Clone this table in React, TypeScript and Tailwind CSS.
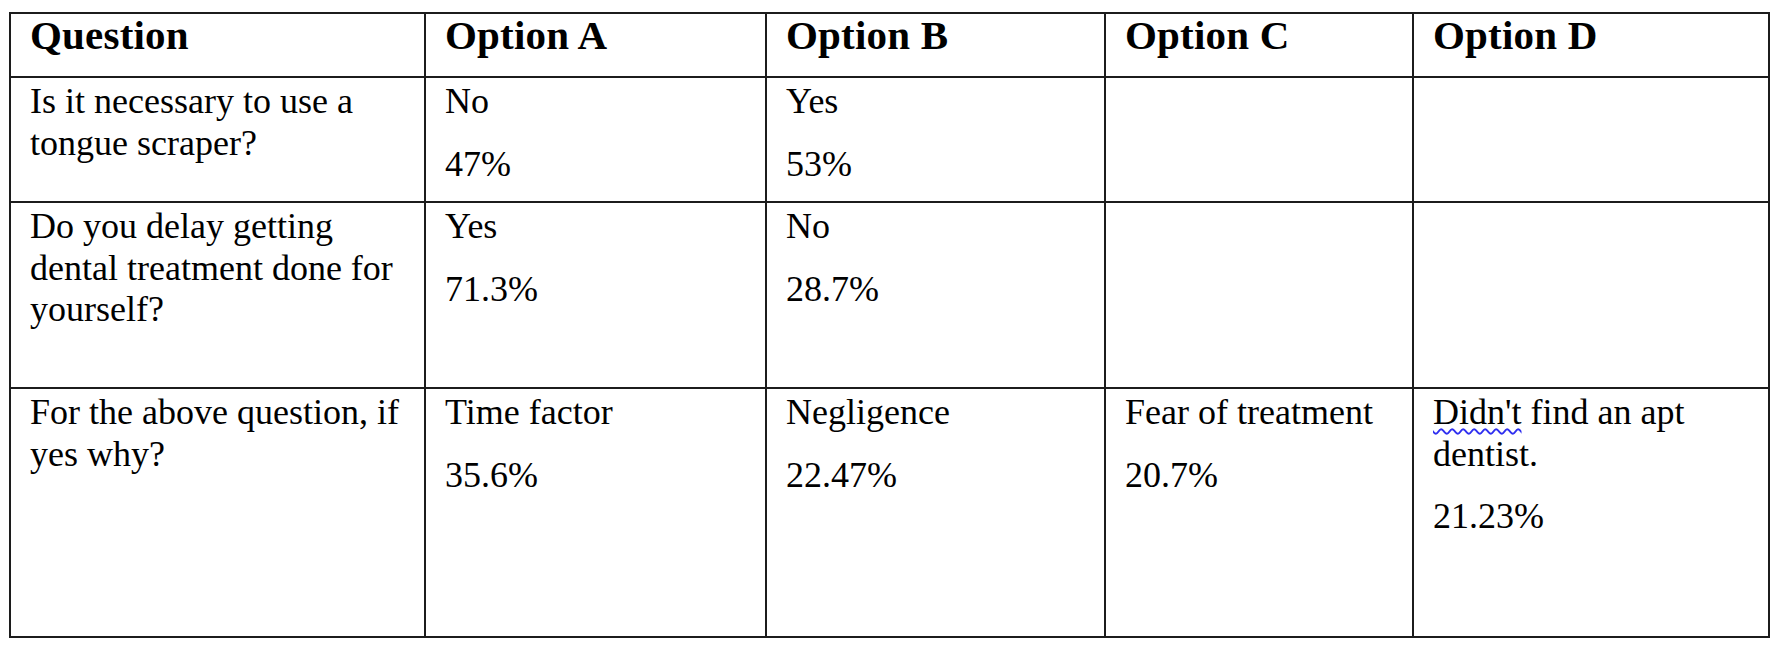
const headers = ["Question", "Option A", "Option B", "Option C", "Option D"];

type Cell = { paras: React.ReactNode[] };

const rows: Cell[][] = [
  [
    { paras: ["Is it necessary to use a tongue scraper?"] },
    { paras: ["No", "47%"] },
    { paras: ["Yes", "53%"] },
    { paras: [] },
    { paras: [] },
  ],
  [
    { paras: ["Do you delay getting dental treatment done for yourself?"] },
    { paras: ["Yes", "71.3%"] },
    { paras: ["No", "28.7%"] },
    { paras: [] },
    { paras: [] },
  ],
  [
    { paras: ["For the above question, if yes why?"] },
    { paras: ["Time factor", "35.6%"] },
    { paras: ["Negligence", "22.47%"] },
    { paras: ["Fear of treatment", "20.7%"] },
    {
      paras: [
        <>
          <span className="underline decoration-wavy decoration-[#2f2ff0] decoration-[1.5px] underline-offset-[4px]">
            Didn't
          </span>{" "}
          find an apt dentist.
        </>,
        "21.23%",
      ],
    },
  ],
];

const App = () => {
  return (
    <div
      className="min-h-screen bg-white pl-[9px] pt-[12px] text-black"
      style={{ fontFamily: '"Liberation Serif", "Times New Roman", serif' }}
    >
      <div className="inline-grid grid-cols-[415px_341px_339px_308px_354px] grid-rows-[64px_125px_186px_247px] border-2 border-[#1c1c1c]">
        {/* Header row */}
        {headers.map((h, i) => (
          <div
            key={h}
            className={`border-b-2 border-[#1c1c1c] pl-[19px] pr-[10px] text-[41px] font-bold leading-[42px] tracking-[0.2px] ${
              i < headers.length - 1 ? "border-r-2" : ""
            }`}
          >
            {h}
          </div>
        ))}

        {/* Body rows */}
        {rows.map((row, r) =>
          row.map((cell, c) => (
            <div
              key={`${r}-${c}`}
              className={`border-[#1c1c1c] pl-[19px] pr-[10px] pt-[3px] text-[36px] leading-[41.5px] ${
                c < row.length - 1 ? "border-r-2" : ""
              } ${r < rows.length - 1 ? "border-b-2" : ""}`}
            >
              {cell.paras.map((p, k) => (
                <p key={k} className="mb-[21px]">
                  {p}
                </p>
              ))}
            </div>
          ))
        )}
      </div>
    </div>
  );
};

export default App;
